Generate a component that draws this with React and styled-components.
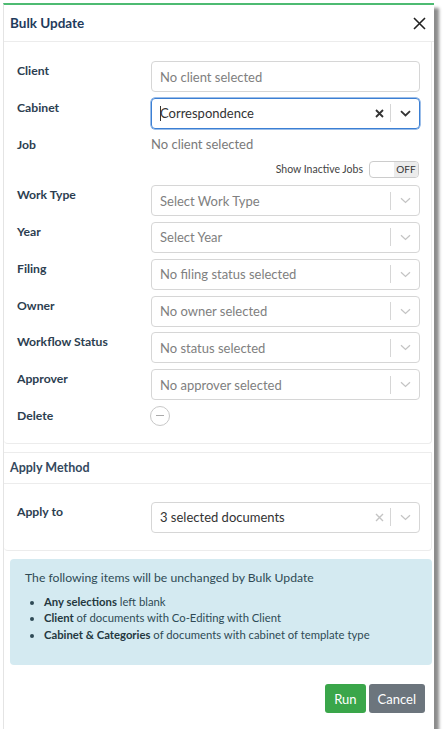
import React from 'react';
import styled, { createGlobalStyle } from 'styled-components';

const GlobalStyle = createGlobalStyle`
  html, body {
    margin: 0;
    padding: 0;
    background: #ffffff;
  }
  body {
    font-family: Lato, "Noto Sans", sans-serif;
    font-size: 13px;
  }
`;

const fields = [
  { label: 'Work Type', placeholder: 'Select Work Type' },
  { label: 'Year', placeholder: 'Select Year' },
  { label: 'Filing', placeholder: 'No filing status selected' },
  { label: 'Owner', placeholder: 'No owner selected' },
  { label: 'Workflow Status', placeholder: 'No status selected' },
  { label: 'Approver', placeholder: 'No approver selected' },
];

const Chevron = ({ dark }) => (
  <svg width="11" height="7" viewBox="0 0 11 7">
    <path
      d="M1 1.2 L5.5 5.5 L10 1.2"
      fill="none"
      stroke={dark ? '#333' : '#c4c4c4'}
      strokeWidth={dark ? 1.8 : 1.2}
    />
  </svg>
);

const ClearX = ({ dark }) => (
  <svg width="9" height="9" viewBox="0 0 9 9">
    <path
      d="M1 1 L8 8 M8 1 L1 8"
      stroke={dark ? '#333' : '#c4c4c4'}
      strokeWidth={dark ? 1.8 : 1.4}
    />
  </svg>
);

const SelectBox = ({ text, value, clearable, focused }) => (
  <Select focused={focused}>
    <SelectText value={value}>
      {focused && <Caret />}
      {text}
    </SelectText>
    {clearable && (
      <Indicator>
        <ClearX dark={focused} />
      </Indicator>
    )}
    <Sep />
    <Indicator wide>
      <Chevron dark={focused} />
    </Indicator>
  </Select>
);

export default function App() {
  return (
    <>
      <GlobalStyle />
      <Modal>
        <Header>
          <Title>Bulk Update</Title>
          <svg width="13" height="13" viewBox="0 0 13 13">
            <path d="M1 1 L12 12 M12 1 L1 12" stroke="#222" strokeWidth="1.6" />
          </svg>
        </Header>

        <Card first>
          <CardBody>
            <Form>
              <Label>Client</Label>
              <Input>No client selected</Input>

              <Label>Cabinet</Label>
              <SelectBox text="Correspondence" value clearable focused />

              <Label short>Job</Label>
              <PlainValue>No client selected</PlainValue>

              <ToggleRow>
                <ToggleLabel>Show Inactive Jobs</ToggleLabel>
                <Toggle>
                  <ToggleOff>OFF</ToggleOff>
                </Toggle>
              </ToggleRow>

              {fields.map((f) => (
                <React.Fragment key={f.label}>
                  <Label>{f.label}</Label>
                  <SelectBox text={f.placeholder} />
                </React.Fragment>
              ))}

              <Label short>Delete</Label>
              <DeleteCircle>
                <span />
              </DeleteCircle>
            </Form>
          </CardBody>
        </Card>

        <Card>
          <CardHeader>Apply Method</CardHeader>
          <CardBody apply>
            <Form>
              <Label>Apply to</Label>
              <SelectBox text="3 selected documents" value clearable />
            </Form>
          </CardBody>
        </Card>

        <Info>
          <InfoTitle>The following items will be unchanged by Bulk Update</InfoTitle>
          <InfoList>
            <li><b>Any selections</b> left blank</li>
            <li><b>Client</b> of documents with Co-Editing with Client</li>
            <li><b>Cabinet &amp; Categories</b> of documents with cabinet of template type</li>
          </InfoList>
        </Info>

        <Footer>
          <Button variant="run">Run</Button>
          <Button>Cancel</Button>
        </Footer>
      </Modal>
    </>
  );
}

const Modal = styled.div`
  margin: 3px 0 0 3px;
  width: 431px;
  background: #fff;
  border-top: 2px solid #4dbb72;
  border-left: 1px solid #e4e4e4;
  box-shadow: 5px 5px 3px rgba(0, 0, 0, 0.45);
  box-sizing: border-box;
`;

const Header = styled.div`
  height: 36px;
  display: flex;
  align-items: center;
  justify-content: space-between;
  padding: 0 8px 0 6px;
  border-bottom: 1px solid #ececec;
`;

const Title = styled.div`
  font-weight: 700;
  font-size: 13.5px;
  color: #1f3b5c;
`;

const Card = styled.div`
  border: 1px solid #ececec;
  border-top: ${(p) => (p.first ? 'none' : '1px solid #ececec')};
  border-left: none;
  border-radius: 0 0 4px 4px;
  margin: 0 2px 8px 0;
`;

const CardHeader = styled.div`
  height: 30px;
  display: flex;
  align-items: center;
  padding-left: 6px;
  font-size: 12.5px;
  font-weight: 700;
  color: #34495e;
  border-bottom: 1px solid #ececec;
`;

const CardBody = styled.div`
  padding: ${(p) => (p.apply ? '18px 10px 17px 13px' : '19px 10px 17px 13px')};
`;

const Form = styled.div`
  display: grid;
  grid-template-columns: 134px 269px;
  row-gap: 5.8px;
  align-items: start;
`;

const Label = styled.div`
  font-size: 12.2px;
  font-weight: 700;
  color: #2c3e50;
  line-height: ${(p) => (p.short ? '19px' : '18px')};
  padding-top: ${(p) => (p.short ? '0' : '1px')};
`;

const Input = styled.div`
  height: 31px;
  box-sizing: border-box;
  border: 1px solid #d6d6d6;
  border-radius: 4px;
  display: flex;
  align-items: center;
  padding-left: 8px;
  color: #808080;
  font-size: 13px;
`;

const Select = styled.div`
  height: 31px;
  box-sizing: border-box;
  border: 1px solid ${(p) => (p.focused ? '#3b7fd4' : '#d6d6d6')};
  box-shadow: ${(p) => (p.focused ? '0 0 0 0.5px #3b7fd4' : 'none')};
  border-radius: 4px;
  display: flex;
  align-items: center;
  padding-left: 8px;
`;

const SelectText = styled.div`
  flex: 1;
  display: flex;
  align-items: center;
  font-size: 13px;
  color: ${(p) => (p.value ? '#333' : '#808080')};
  white-space: nowrap;
`;

const Caret = styled.span`
  display: inline-block;
  width: 1px;
  height: 15px;
  background: #333;
  margin-right: -1px;
`;

const Indicator = styled.div`
  width: ${(p) => (p.wide ? '28px' : '22px')};
  display: flex;
  align-items: center;
  justify-content: center;
`;

const Sep = styled.div`
  width: 1px;
  height: 18px;
  background: #d6d6d6;
`;

const PlainValue = styled.div`
  font-size: 13px;
  color: #7a7a7a;
  line-height: 19px;
`;

const ToggleRow = styled.div`
  grid-column: 1 / -1;
  display: flex;
  justify-content: flex-end;
  align-items: center;
  gap: 6px;
  height: 20px;
  padding-right: 1px;
`;

const ToggleLabel = styled.span`
  font-size: 10.5px;
  color: #444;
`;

const Toggle = styled.div`
  width: 50px;
  height: 17px;
  box-sizing: border-box;
  border: 1px solid #ccc;
  border-radius: 4px;
  display: flex;
  justify-content: flex-end;
  overflow: hidden;
`;

const ToggleOff = styled.div`
  width: 24px;
  background: #ececec;
  font-size: 10px;
  color: #333;
  display: flex;
  align-items: center;
  justify-content: center;
`;

const DeleteCircle = styled.div`
  width: 18px;
  height: 18px;
  border: 1px solid #c8c8c8;
  border-radius: 50%;
  display: flex;
  align-items: center;
  justify-content: center;
  margin-left: -1px;
  span {
    width: 8px;
    height: 1px;
    background: #aaa;
  }
`;

const Info = styled.div`
  margin: 0 2px 0 6px;
  background: #d4eaf1;
  border-radius: 4px;
  padding: 10px 15px 22px 15px;
  color: #2f4a55;
`;

const InfoTitle = styled.div`
  font-size: 12.2px;
  line-height: 18px;
  margin-bottom: 7px;
`;

const InfoList = styled.ul`
  margin: 0;
  padding-left: 19px;
  font-size: 11.3px;
  line-height: 16.5px;
  b {
    font-weight: 700;
    color: #24383f;
  }
`;

const Footer = styled.div`
  display: flex;
  justify-content: flex-end;
  gap: 3px;
  padding: 19px 9px 16px 0;
`;

const Button = styled.button`
  height: 29px;
  border: none;
  border-radius: 3px;
  padding: 0 9px;
  font-family: inherit;
  font-size: 13px;
  color: #fff;
  background: ${(p) => (p.variant === 'run' ? '#3aa64a' : '#6c757d')};
`;
